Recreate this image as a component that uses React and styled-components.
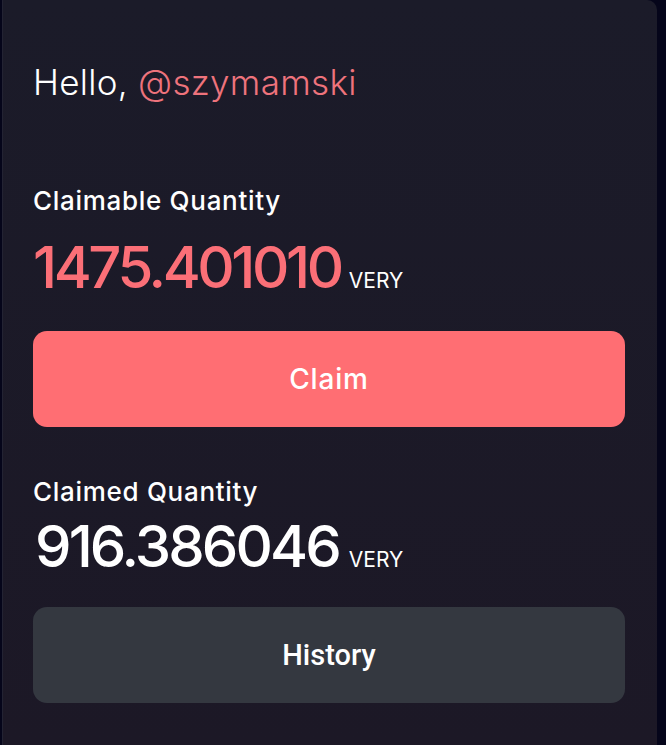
import React from "react";
import styled, { createGlobalStyle } from "styled-components";

const GlobalStyle = createGlobalStyle`
  html, body {
    margin: 0;
    padding: 0;
    background: #05051a;
  }
  body {
    font-family: "Inter", "Noto Sans", sans-serif;
    color: #ffffff;
  }
`;

const Card = styled.div`
  box-sizing: border-box;
  width: 655px;
  min-height: 745px;
  margin-left: 2px;
  padding: 61px 32px 40px 30px;
  background: linear-gradient(180deg, #1b1b29 0%, #1c1826 100%);
  border-left: 1px solid #232333;
  border-top-right-radius: 10px;
  display: flex;
  flex-direction: column;
`;

const Greeting = styled.h1`
  margin: 0;
  font-size: 35px;
  font-weight: 300;
  line-height: 42px;
  letter-spacing: 0.3px;
`;

const Handle = styled.span`
  color: #ee737c;
`;

const Label = styled.div`
  margin-top: ${(p) => p.$top}px;
  font-size: 26px;
  font-weight: 500;
  line-height: 30px;
  letter-spacing: 0.7px;
`;

const AmountRow = styled.div`
  display: flex;
  align-items: baseline;
  gap: ${(p) => (p.$indent ? 10 : 8)}px;
  margin-top: ${(p) => p.$top}px;
  padding-left: ${(p) => p.$indent || 0}px;
`;

const Amount = styled.span`
  font-size: 58px;
  font-weight: 500;
  line-height: 62px;
  letter-spacing: ${(p) => (p.$accent ? -3.4 : -2.9)}px;
  color: ${(p) => (p.$accent ? "#fb6f77" : "#ffffff")};
`;

const Unit = styled.span`
  font-size: 21px;
  font-weight: 400;
  color: #ffffff;
`;

const Button = styled.button`
  margin-top: ${(p) => p.$top}px;
  width: 592px;
  height: 96px;
  padding: 0;
  border: none;
  border-radius: 14px;
  background: ${(p) => (p.$primary ? "#ff6e73" : "#343840")};
  color: #ffffff;
  font-family: ${(p) =>
    p.$primary ? '"Inter", "Noto Sans", sans-serif' : '"Roboto", "Liberation Sans", sans-serif'};
  font-size: ${(p) => (p.$primary ? 28 : 29)}px;
  font-weight: 500;
  letter-spacing: ${(p) => (p.$primary ? 0.8 : 0)}px;
  cursor: pointer;
`;

export default function App() {
  return (
    <>
      <GlobalStyle />
      <Card>
        <Greeting>
          Hello, <Handle>@szymamski</Handle>
        </Greeting>
        <Label $top={83}>Claimable Quantity</Label>
        <AmountRow $top={20}>
          <Amount $accent>1475.401010</Amount>
          <Unit>VERY</Unit>
        </AmountRow>
        <Button $primary $top={33}>
          Claim
        </Button>
        <Label $top={50}>Claimed Quantity</Label>
        <AmountRow $top={8} $indent={2}>
          <Amount>916.386046</Amount>
          <Unit>VERY</Unit>
        </AmountRow>
        <Button $top={30}>History</Button>
      </Card>
    </>
  );
}
